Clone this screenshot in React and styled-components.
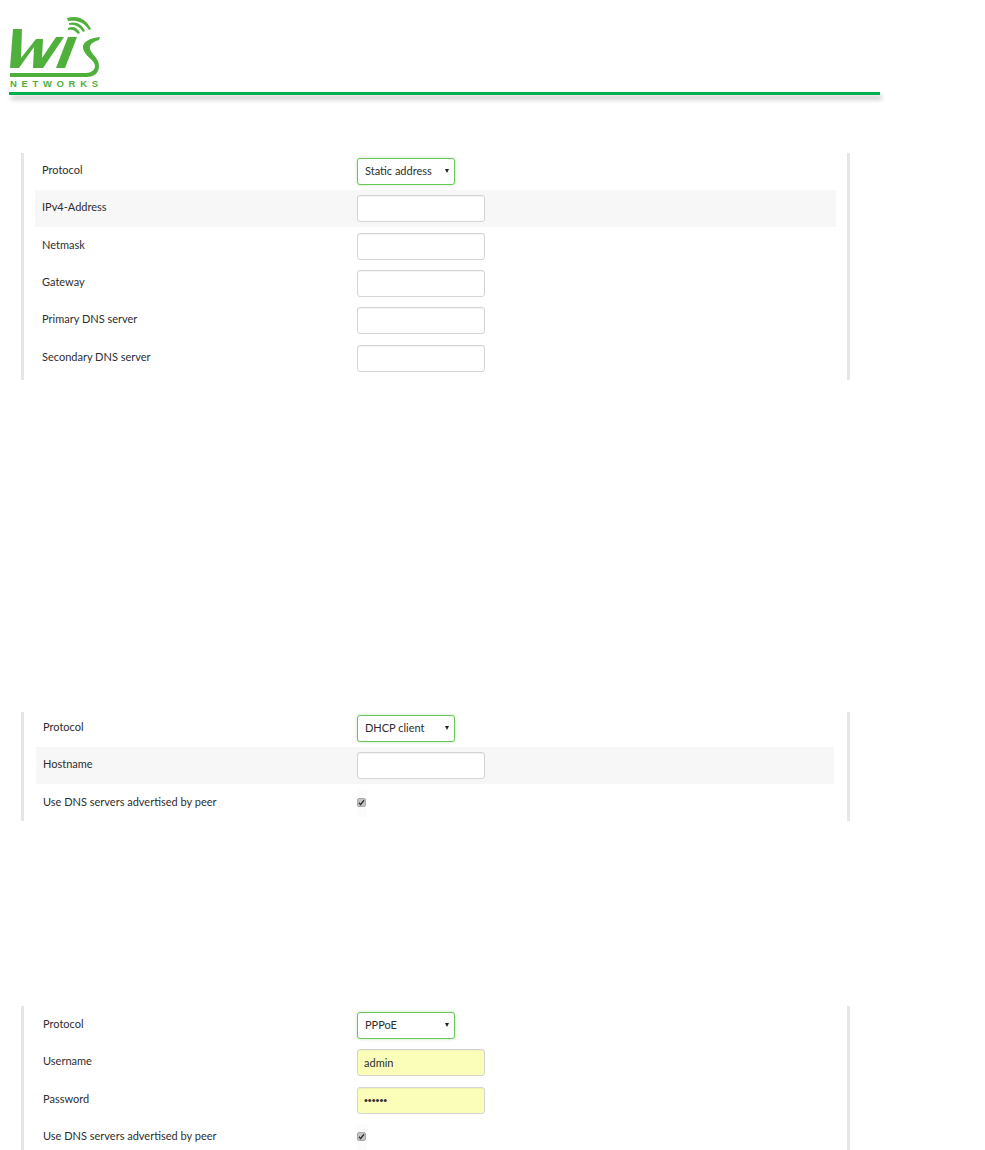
import React from 'react';
import styled, { createGlobalStyle } from 'styled-components';

const GlobalStyle = createGlobalStyle`
    html, body {
        margin: 0;
        padding: 0;
        background: #fff;
    }
    body {
        font-family: Lato, "Open Sans", "Liberation Sans", sans-serif;
        color: #2e2e2e;
    }
`;

const Page = styled.div`
    width: 985px;
    height: 1150px;
    overflow: hidden;
`;

const Header = styled.header`
    width: 871px;
    height: 95px;
    margin-left: 9px;
    display: flex;
    flex-direction: column;
    justify-content: flex-end;
`;

const Logo = styled.div`
    width: 96px;
    height: 76px;
    margin-bottom: 3px;
    margin-left: -1px;
`;

const Rule = styled.div`
    height: 3px;
    background: #00b050;
    box-shadow: 2px 4px 5px rgba(0, 0, 0, 0.3);
`;

const Panel = styled.section`
    width: 829px;
    height: ${(p) => p.$height}px;
    margin-top: ${(p) => p.$top}px;
    margin-left: 21px;
    padding: 0 ${(p) => (p.$wide ? 11 : 13)}px 0 ${(p) => (p.$wide ? 11 : 12)}px;
    box-sizing: border-box;
    overflow: hidden;
    border-left: 3px solid #e6e6e6;
    border-right: 3px solid #e6e6e6;
    --label-width: ${(p) => (p.$wide ? 315 : 314)}px;
`;

const Rows = styled.div`
    margin-top: ${(p) => p.$shift || 0}px;
`;

const Row = styled.div`
    display: flex;
    align-items: center;
    height: ${(p) => (p.$shaded ? '37px' : '37.4px')};
    padding-left: 7px;
    background: ${(p) => (p.$shaded ? '#f7f7f7' : 'transparent')};
`;

const Label = styled.label`
    flex: 0 0 var(--label-width);
    font-size: 11px;
    line-height: 14px;
    color: #2e2e2e;
    position: relative;
    top: -1.5px;
`;

const SelectWrap = styled.div`
    position: relative;
    width: 98px;
    height: 27px;

    &::after {
        content: '';
        position: absolute;
        right: 6px;
        top: 11px;
        border-left: 2.5px solid transparent;
        border-right: 2.5px solid transparent;
        border-top: 4px solid #222;
    }
`;

const Select = styled.select`
    appearance: none;
    width: 100%;
    height: 100%;
    box-sizing: border-box;
    padding: 0 7px 2px;
    font-family: inherit;
    font-size: 11px;
    color: #2e2e2e;
    background: #fff;
    border: 1px solid #69c858;
    border-radius: 3px;
    box-shadow: 0 0 3px rgba(105, 200, 88, 0.45);
    outline: none;
`;

const Input = styled.input`
    display: block;
    width: 128px;
    height: 27px;
    box-sizing: border-box;
    padding: 0 6px;
    font-family: ${(p) => (p.type === 'password' ? '"Liberation Sans", sans-serif' : 'inherit')};
    font-size: 11px;
    color: #2e2e2e;
    background: ${(p) => (p.$filled ? '#fbfeb9' : '#fff')};
    border: 1px solid #d4d4d4;
    border-radius: 3px;
    box-shadow: inset 0 1px 1px rgba(0, 0, 0, 0.05);
    outline: none;
`;

const CheckCell = styled.div`
    width: 10px;
    height: 27px;
    display: flex;
    align-items: center;
    background: #fcfcfc;
`;

const CheckBox = styled.span`
    width: 9px;
    height: 9px;
    margin-top: -2px;
    display: flex;
    align-items: center;
    justify-content: center;
    border-radius: 2px;
    background: #c4c4c4;
    border: 1px solid #aaa;
    box-sizing: border-box;
`;

function WisLogo() {
    return (
        <Logo>
            <svg width="96" height="76" viewBox="8 13 96 76" fill="#4fb03c">
                <path d="M13 29h9l-1 29 15-19h7l-1 19 14-21h8L43 68H33l1-21-15 21H10z" />
                <path d="M68 37h9L65 68h-9z" />
                <path d="M68 28c5-2 9-1 12 5l-2 1c-3-4-6-5-10-4z" />
                <path d="M69 23c7-2 13 1 16 8l-2 1c-3-5-8-8-14-7z" />
                <path d="M67 18c11-3 19 1 24 11l-2 1c-5-8-12-10-21-9z" />
                <path d="M100 37l-1 3c-7 2-10 5-9 9 2 6 9 9 9 17 0 7-5 11-12 11H10v-4h76c5 0 9-3 9-7 0-6-11-10-12-18-1-6 7-10 17-11z" />
                <text x="10" y="86.5" fontFamily="Liberation Sans, sans-serif" fontSize="9.5" fontWeight="700" textLength="88">
                    NETWORKS
                </text>
            </svg>
        </Logo>
    );
}

function Tick() {
    return (
        <svg width="7" height="7" viewBox="0 0 7 7" fill="none">
            <path d="M1 3.8l1.6 1.8L6 1.2" stroke="#333" strokeWidth="1.4" />
        </svg>
    );
}

function ProtocolRow({ value }) {
    return (
        <Row>
            <Label>Protocol</Label>
            <SelectWrap>
                <Select defaultValue={value}>
                    <option>Static address</option>
                    <option>DHCP client</option>
                    <option>PPPoE</option>
                </Select>
            </SelectWrap>
        </Row>
    );
}

function PeerDnsRow() {
    return (
        <Row>
            <Label>Use DNS servers advertised by peer</Label>
            <CheckCell>
                <CheckBox>
                    <Tick />
                </CheckBox>
            </CheckCell>
        </Row>
    );
}

export default function App() {
    return (
        <Page>
            <GlobalStyle />
            <Header>
                <WisLogo />
                <Rule />
            </Header>

            <Panel $top={58} $height={227} $wide>
                <Rows>
                    <ProtocolRow value="Static address" />
                    <Row $shaded>
                        <Label>IPv4-Address</Label>
                        <Input />
                    </Row>
                    <Row>
                        <Label>Netmask</Label>
                        <Input />
                    </Row>
                    <Row>
                        <Label>Gateway</Label>
                        <Input />
                    </Row>
                    <Row>
                        <Label>Primary DNS server</Label>
                        <Input />
                    </Row>
                    <Row>
                        <Label>Secondary DNS server</Label>
                        <Input />
                    </Row>
                </Rows>
            </Panel>

            <Panel $top={332} $height={109}>
                <Rows $shift={-2}>
                    <ProtocolRow value="DHCP client" />
                    <Row $shaded>
                        <Label>Hostname</Label>
                        <Input />
                    </Row>
                    <PeerDnsRow />
                </Rows>
            </Panel>

            <Panel $top={185} $height={144}>
                <Rows $shift={0.6}>
                    <ProtocolRow value="PPPoE" />
                    <Row>
                        <Label>Username</Label>
                        <Input $filled defaultValue="admin" />
                    </Row>
                    <Row>
                        <Label>Password</Label>
                        <Input $filled type="password" defaultValue="secret" />
                    </Row>
                    <PeerDnsRow />
                </Rows>
            </Panel>
        </Page>
    );
}
